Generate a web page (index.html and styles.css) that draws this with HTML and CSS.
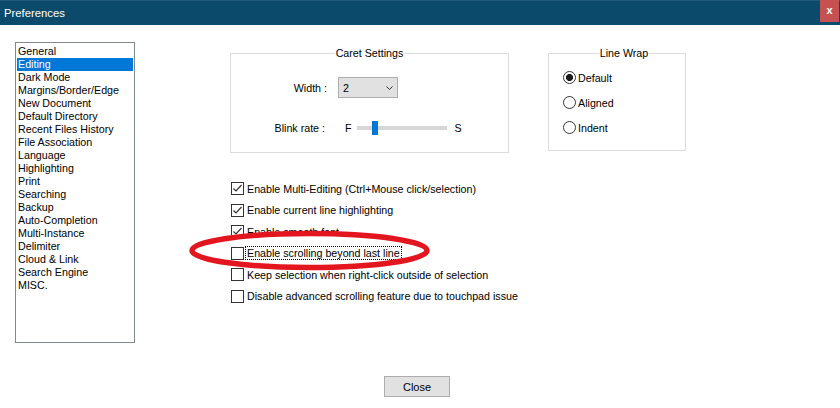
FILE: index.html
```html
<!DOCTYPE html>
<html lang="en">
<head>
    <meta charset="UTF-8">
    <meta name="viewport" content="width=device-width, initial-scale=1.0">
    <title>Preferences</title>
    <link rel="stylesheet" href="styles.css">
</head>
<body>
    <div class="titlebar">
        <span class="title">Preferences</span>
        <span class="close-x">x</span>
    </div>

    <div class="content">
        <ul class="categories">
            <li>General</li>
            <li class="selected">Editing</li>
            <li>Dark Mode</li>
            <li>Margins/Border/Edge</li>
            <li>New Document</li>
            <li>Default Directory</li>
            <li>Recent Files History</li>
            <li>File Association</li>
            <li>Language</li>
            <li>Highlighting</li>
            <li>Print</li>
            <li>Searching</li>
            <li>Backup</li>
            <li>Auto-Completion</li>
            <li>Multi-Instance</li>
            <li>Delimiter</li>
            <li>Cloud &amp; Link</li>
            <li>Search Engine</li>
            <li>MISC.</li>
        </ul>

        <div class="main">
            <div class="groups">
                <fieldset class="group caret">
                    <legend>Caret Settings</legend>
                    <div class="caret-grid">
                        <span class="field-label">Width :</span>
                        <div class="select">
                            <span>2</span>
                            <svg width="7" height="4" viewBox="0 0 7 4"><polyline points="0.5,0.5 3.5,3.5 6.5,0.5" fill="none" stroke="#333" stroke-width="1"/></svg>
                        </div>
                        <span class="field-label blink-label">Blink rate :</span>
                        <div class="slider-row">
                            <span>F</span>
                            <div class="track"><div class="thumb"></div></div>
                            <span>S</span>
                        </div>
                    </div>
                </fieldset>

                <fieldset class="group wrap">
                    <legend>Line Wrap</legend>
                    <div class="radio-row"><span class="radio checked"></span>Default</div>
                    <div class="radio-row"><span class="radio"></span>Aligned</div>
                    <div class="radio-row"><span class="radio"></span>Indent</div>
                </fieldset>
            </div>

            <div class="checks">
                <div class="check-row">
                    <span class="box"><svg width="11" height="11" viewBox="0 0 11 11"><polyline points="1.5,5.5 4,8 9.5,2" fill="none" stroke="#333" stroke-width="1.2"/></svg></span>
                    <span>Enable Multi-Editing (Ctrl+Mouse click/selection)</span>
                </div>
                <div class="check-row">
                    <span class="box"><svg width="11" height="11" viewBox="0 0 11 11"><polyline points="1.5,5.5 4,8 9.5,2" fill="none" stroke="#333" stroke-width="1.2"/></svg></span>
                    <span>Enable current line highlighting</span>
                </div>
                <div class="check-row">
                    <span class="box"><svg width="11" height="11" viewBox="0 0 11 11"><polyline points="1.5,5.5 4,8 9.5,2" fill="none" stroke="#333" stroke-width="1.2"/></svg></span>
                    <span>Enable smooth font</span>
                </div>
                <div class="check-row">
                    <span class="box"></span>
                    <span class="focused">Enable scrolling beyond last line</span>
                </div>
                <div class="check-row">
                    <span class="box"></span>
                    <span>Keep selection when right-click outside of selection</span>
                </div>
                <div class="check-row">
                    <span class="box"></span>
                    <span>Disable advanced scrolling feature due to touchpad issue</span>
                </div>

                <!-- hand drawn highlight over the option -->
                <svg class="annotation" width="250" height="50" viewBox="0 0 250 50">
                    <ellipse cx="124.5" cy="23.5" rx="117.5" ry="17" fill="none" stroke="#e3151f" stroke-width="5.5"/>
                </svg>
            </div>
        </div>
    </div>

    <div class="footer">
        <button class="btn">Close</button>
    </div>
</body>
</html>
```

FILE: styles.css
```css
html, body {
    margin: 0;
}
body {
    font-family: "Liberation Sans", Arial, sans-serif;
    font-size: 10.7px;
    color: #000;
    background-color: #fff;
    width: 840px;
    height: 408px;
    overflow: hidden;
    display: flex;
    flex-direction: column;
}
.titlebar {
    height: 25px;
    flex-shrink: 0;
    display: flex;
    justify-content: space-between;
    align-items: flex-start;
    background-color: #0b4a6a;
    box-shadow: inset 0 1px 0 #215a78;
}
.title {
    color: #fff;
    font-size: 11.3px;
    line-height: 14px;
    padding: 6px 0 0 4px;
}
.close-x {
    width: 19px;
    height: 22px;
    margin-right: 1px;
    background-color: #c75050;
    color: #fff;
    font-weight: bold;
    font-size: 11px;
    line-height: 21px;
    text-align: center;
}
.content {
    display: flex;
    align-items: flex-start;
    padding: 17px 0 0 15px;
}
.categories {
    list-style: none;
    margin: 0;
    padding: 2px 1px;
    width: 120px;
    height: 301px;
    box-sizing: border-box;
    border: 1px solid #828790;
}
.categories li {
    line-height: 13px;
    padding-left: 1px;
    white-space: nowrap;
}
.categories li.selected {
    background-color: #0078d7;
    color: #fff;
}
.main {
    margin-left: 95px;
    padding-top: 4px;
}
.groups {
    display: flex;
    align-items: flex-start;
    gap: 39px;
}
.group {
    margin: 0;
    padding: 0;
    border: 1px solid #dcdcdc;
    min-inline-size: auto;
    box-sizing: border-box;
}
.group legend {
    margin: 0 auto;
    padding: 0 1px;
    line-height: 14px;
}
.caret {
    width: 279px;
}
.caret-grid {
    display: grid;
    grid-template-columns: 96px auto;
    column-gap: 11px;
    row-gap: 23px;
    align-items: center;
    justify-items: start;
    padding: 17px 0 17px 0;
}
.field-label {
    justify-self: end;
}
.blink-label {
    padding-right: 2px;
}
.select {
    width: 60px;
    height: 21px;
    box-sizing: border-box;
    border: 1px solid #adadad;
    background-color: #e1e1e1;
    display: flex;
    align-items: center;
    justify-content: space-between;
    padding: 0 4px 0 4px;
}
.slider-row {
    display: flex;
    align-items: center;
    height: 14px;
    margin-left: 7px;
}
.track {
    width: 90px;
    height: 14px;
    margin: 0 8px 0 5px;
    display: flex;
    align-items: center;
    background: linear-gradient(#d6d6d6, #d6d6d6) center / 100% 4px no-repeat;
}
.thumb {
    width: 6px;
    height: 14px;
    margin-left: 15px;
    background-color: #0078d7;
}
.wrap {
    width: 138px;
    padding: 5px 0 10px 14px;
}
.radio-row {
    display: flex;
    align-items: center;
    gap: 2px;
    height: 25px;
}
.radio {
    width: 13px;
    height: 13px;
    box-sizing: border-box;
    border: 1px solid #333;
    border-radius: 50%;
}
.radio.checked {
    background: radial-gradient(circle, #1a1a1a 0 3.3px, transparent 3.8px);
}
.checks {
    position: relative;
    margin-top: 25px;
}
.check-row {
    display: flex;
    align-items: center;
    gap: 3px;
    height: 21.5px;
    padding-left: 1px;
    white-space: nowrap;
}
.box {
    width: 13px;
    height: 13px;
    box-sizing: border-box;
    border: 1px solid #333;
    display: flex;
    align-items: center;
    justify-content: center;
}
.focused {
    margin-left: -1px;
    padding: 0 1px;
    line-height: 12px;
    outline: 1px dotted #000;
}
.annotation {
    position: absolute;
    left: -45px;
    top: 49px;
    pointer-events: none;
}
.footer {
    margin-top: auto;
    display: flex;
    justify-content: center;
    padding: 0 6px 11px 0;
}
.btn {
    width: 66px;
    height: 21px;
    box-sizing: border-box;
    border: 1px solid #adadad;
    background-color: #e1e1e1;
    font-family: inherit;
    font-size: 11px;
    color: #000;
    padding: 0;
}
```
